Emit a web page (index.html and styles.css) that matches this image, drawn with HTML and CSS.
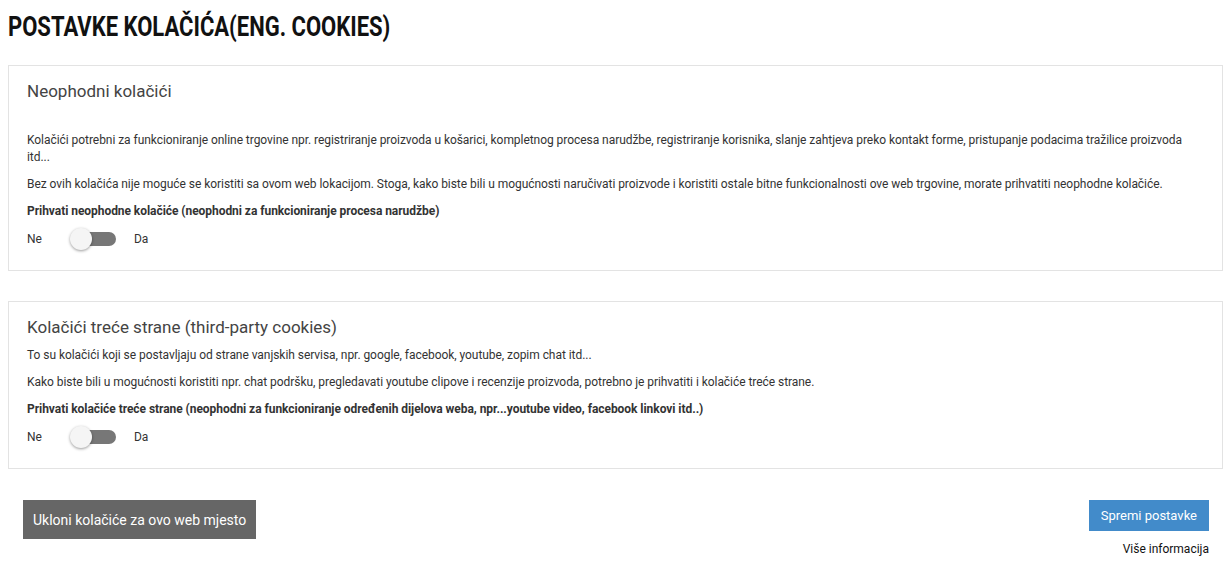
FILE: index.html
```html
<!DOCTYPE html>
<html lang="hr">
<head>
    <meta charset="UTF-8">
    <meta name="viewport" content="width=device-width, initial-scale=1.0">
    <title>Postavke kolačića</title>
    <link rel="stylesheet" href="styles.css">
</head>
<body>

<div class="page">
    <h1 class="title"><span>POSTAVKE KOLAČIĆA(ENG. COOKIES)</span></h1>

    <div class="cookie-box">
        <h2 class="box-title box-title-first">Neophodni kolačići</h2>
        <p>Kolačići potrebni za funkcioniranje online trgovine npr. registriranje proizvoda u košarici, kompletnog procesa narudžbe, registriranje korisnika, slanje zahtjeva preko kontakt forme, pristupanje podacima tražilice proizvoda itd...</p>
        <p>Bez ovih kolačića nije moguće se koristiti sa ovom web lokacijom. Stoga, kako biste bili u mogućnosti naručivati proizvode i koristiti ostale bitne funkcionalnosti ove web trgovine, morate prihvatiti neophodne kolačiće.</p>
        <p class="accept">Prihvati neophodne kolačiće (neophodni za funkcioniranje procesa narudžbe)</p>
        <div class="switch-row">
            <span>Ne</span>
            <span class="switch"><span class="knob"></span></span>
            <span>Da</span>
        </div>
    </div>

    <div class="cookie-box">
        <h2 class="box-title">Kolačići treće strane (third-party cookies)</h2>
        <p>To su kolačići koji se postavljaju od strane vanjskih servisa, npr. google, facebook, youtube, zopim chat itd...</p>
        <p>Kako biste bili u mogućnosti koristiti npr. chat podršku, pregledavati youtube clipove i recenzije proizvoda, potrebno je prihvatiti i kolačiće treće strane.</p>
        <p class="accept">Prihvati kolačiće treće strane (neophodni za funkcioniranje određenih dijelova weba, npr...youtube video, facebook linkovi itd..)</p>
        <div class="switch-row">
            <span>Ne</span>
            <span class="switch"><span class="knob"></span></span>
            <span>Da</span>
        </div>
    </div>

    <div class="actions">
        <button class="btn btn-remove">Ukloni kolačiće za ovo web mjesto</button>
        <div class="actions-right">
            <button class="btn btn-save">Spremi postavke</button>
            <a class="more" href="#">Više informacija</a>
        </div>
    </div>
</div>

</body>
</html>
```

FILE: styles.css
```css
body {
    font-family: Roboto, "Liberation Sans", Arial, sans-serif;
    margin: 0;
    color: #333;
    background: #fff;
}

.page {
    padding: 0 5px 0 8px;
}

.title {
    margin: 0;
    padding-top: 11px;
    height: 54px;
    font-size: 27px;
    font-weight: 700;
    color: #111;
    line-height: 32px;
}

.title span {
    display: inline-block;
    transform: scaleX(0.815);
    transform-origin: left center;
    white-space: nowrap;
}

.cookie-box {
    border: 1px solid #e3e3e3;
    padding: 15px 18px 19px 18px;
    margin-bottom: 30px;
}

.box-title {
    margin: 0 0 10px;
    font-size: 17px;
    font-weight: 400;
    color: #444;
    line-height: 20px;
}

.box-title-first {
    margin-bottom: 31px;
}

.cookie-box p {
    margin: 0 0 10px;
    font-size: 12px;
    line-height: 17px;
    letter-spacing: -0.05px;
}

.cookie-box .accept {
    font-weight: 700;
    margin-bottom: 7px;
}

.switch-row {
    display: flex;
    align-items: center;
    font-size: 12px;
    height: 24px;
}

.switch {
    position: relative;
    width: 42px;
    height: 14px;
    background: #777;
    border-radius: 7px;
    margin: 0 18px 0 32px;
}

.knob {
    position: absolute;
    left: -4px;
    top: -4px;
    width: 22px;
    height: 22px;
    border-radius: 50%;
    background: #f5f5f5;
    box-shadow: 0 1px 3px rgba(0, 0, 0, 0.4);
}

.actions {
    display: flex;
    justify-content: space-between;
    align-items: flex-start;
    padding: 1px 14px 0 15px;
}

.btn {
    border: none;
    font-family: inherit;
    color: #fff;
    cursor: pointer;
}

.btn-remove {
    background: #666;
    font-size: 14px;
    height: 39px;
    padding: 0 10px;
}

.actions-right {
    display: flex;
    flex-direction: column;
    align-items: flex-end;
}

.btn-save {
    background: #428bca;
    font-size: 13px;
    height: 31px;
    padding: 0 12px;
}

.more {
    margin-top: 11px;
    font-size: 12px;
    color: #111;
    text-decoration: none;
}
```
